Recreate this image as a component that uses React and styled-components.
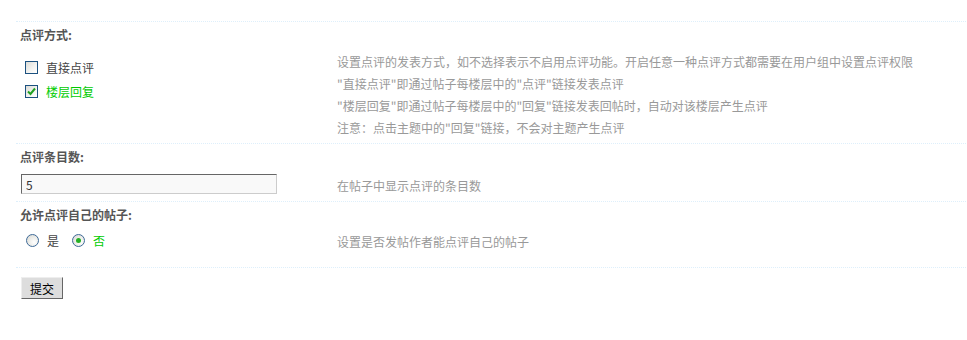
import React from "react";
import styled, { createGlobalStyle } from "styled-components";

const GlobalStyle = createGlobalStyle`
  body {
    margin: 0;
    background: #fff;
    font: 12px "Noto Sans CJK SC", "Liberation Sans", sans-serif;
    color: #333;
  }
`;

const Page = styled.div`
  padding: 21px 1px 0 16px;
`;

const Section = styled.div`
  border-top: 1px dotted #deeffb;
  padding-bottom: ${(p) => p.$pb || 0}px;
`;

const Title = styled.div`
  padding: 3px 0 0 4px;
  line-height: 20px;
  font-weight: bold;
  color: #555;
`;

const Row = styled.div`
  display: grid;
  grid-template-columns: 317px 1fr;
`;

const Field = styled.div`
  padding: ${(p) => p.$pt}px 0 0 ${(p) => p.$pl || 9}px;
`;

const Tips = styled.div`
  padding: ${(p) => p.$pt}px 0 0 4px;
  line-height: 22px;
  color: #999;
`;

const OptionList = styled.ul`
  list-style: none;
  margin: 0;
  padding: 0;
  display: flex;
  flex-direction: ${(p) => (p.$inline ? "row" : "column")};
  gap: ${(p) => (p.$inline ? "12px" : "0")};
`;

const Option = styled.li`
  display: flex;
  align-items: center;
  gap: 8px;
  height: 24px;
  color: ${(p) => (p.$checked ? "#00cc00" : "#444")};
`;

const Box = styled.span`
  width: 11px;
  height: 11px;
  border: 1px solid #1c5180;
  background: linear-gradient(135deg, #dcdcd6 0%, #f4f4f2 60%, #fff 100%);
  display: flex;
  align-items: center;
  justify-content: center;
`;

const Radio = styled.span`
  width: 11px;
  height: 11px;
  border-radius: 50%;
  border: 1px solid #3e6a98;
  background: radial-gradient(circle at 65% 65%, #fff 0%, #ecece8 50%, #d4d4ce 100%);
  display: flex;
  align-items: center;
  justify-content: center;
  margin-left: 1px;
  &::after {
    content: "";
    width: 5px;
    height: 5px;
    border-radius: 50%;
    background: ${(p) => (p.$checked ? "#25b024" : "transparent")};
  }
`;

const TextInput = styled.input`
  box-sizing: border-box;
  width: 256px;
  height: 20px;
  margin: 0;
  padding: 0 4px;
  border: 1px solid;
  border-color: #666 #ccc #ccc #666;
  background: #f9f9f9;
  font: 12px "Noto Sans CJK SC", "Liberation Sans", sans-serif;
  color: #333;
  outline: none;
`;

const Submit = styled.button`
  box-sizing: border-box;
  width: 42px;
  height: 22px;
  margin: 9px 0 0 5px;
  padding: 0;
  border: 1px solid;
  border-color: #eee #666 #666 #eee;
  background: #ddd;
  font: 12px "Noto Sans CJK SC", "Liberation Sans", sans-serif;
  color: #000;
`;

const Check = () => (
  <svg width="9" height="9" viewBox="0 0 9 9">
    <path d="M1 4.5 L3.5 7 L8 1.5" fill="none" stroke="#21a121" strokeWidth="2" />
  </svg>
);

const CheckOption = ({ checked, children }) => (
  <Option $checked={checked}>
    <Box>{checked && <Check />}</Box>
    {children}
  </Option>
);

const RadioOption = ({ checked, children }) => (
  <Option $checked={checked}>
    <Radio $checked={checked} />
    {children}
  </Option>
);

export default function App() {
  return (
    <Page>
      <GlobalStyle />
      <Section $pb={4}>
        <Title>点评方式:</Title>
        <Row>
          <Field $pt={10}>
            <OptionList>
              <CheckOption>直接点评</CheckOption>
              <CheckOption checked>楼层回复</CheckOption>
            </OptionList>
          </Field>
          <Tips $pt={6}>
            设置点评的发表方式，如不选择表示不启用点评功能。开启任意一种点评方式都需要在用户组中设置点评权限
            <br />
            "直接点评"即通过帖子每楼层中的"点评"链接发表点评
            <br />
            "楼层回复"即通过帖子每楼层中的"回复"链接发表回帖时，自动对该楼层产生点评
            <br />
            注意：点击主题中的"回复"链接，不会对主题产生点评
          </Tips>
        </Row>
      </Section>
      <Section $pb={4}>
        <Title>点评条目数:</Title>
        <Row>
          <Field $pt={7} $pl={5}>
            <TextInput defaultValue="5" />
          </Field>
          <Tips $pt={8}>在帖子中显示点评的条目数</Tips>
        </Row>
      </Section>
      <Section $pb={14}>
        <Title>允许点评自己的帖子:</Title>
        <Row>
          <Field $pt={3}>
            <OptionList $inline>
              <RadioOption>是</RadioOption>
              <RadioOption checked>否</RadioOption>
            </OptionList>
          </Field>
          <Tips $pt={6}>设置是否发帖作者能点评自己的帖子</Tips>
        </Row>
      </Section>
      <Section>
        <Submit>提交</Submit>
      </Section>
    </Page>
  );
}
